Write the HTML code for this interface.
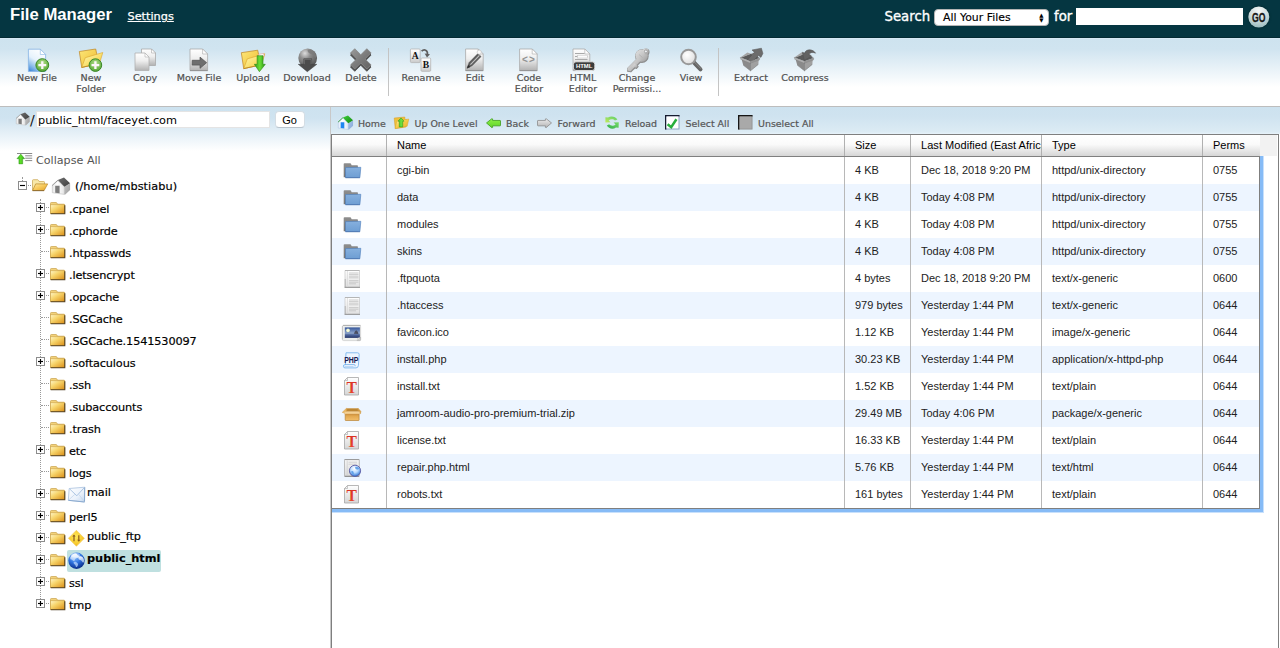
<!DOCTYPE html>
<html><head><meta charset="utf-8"><title>File Manager</title>
<style>
html,body{margin:0;padding:0;}
body{width:1280px;height:648px;overflow:hidden;background:#fff;position:relative;font-family:"DejaVu Sans","Liberation Sans",sans-serif;}
svg{display:block;overflow:visible;}
.a{position:absolute;white-space:nowrap;}
#hdr{position:absolute;left:0;top:0;width:1280px;height:38px;background:#053641;box-shadow:inset 0 -1px 0 #032a33;}
#title{left:10px;top:5px;font:bold 16.7px/20px "Liberation Sans",sans-serif;color:#fff;}
#settings{-webkit-text-stroke:0.25px #fff;left:127.5px;top:9px;font-size:11.3px;line-height:16px;color:#fff;text-decoration:underline;}
#srch{-webkit-text-stroke:0.35px #fff;left:884.5px;top:8px;font-size:13.3px;line-height:18px;color:#fff;}
#for{-webkit-text-stroke:0.35px #fff;left:1054px;top:8px;font-size:13.3px;line-height:18px;color:#fff;}
#sel{left:934px;top:9px;width:115px;height:17px;background:#fff;border-radius:4px;box-sizing:border-box;border:1px solid #b5b5b5;font-size:10.9px;line-height:15px;color:#000;padding-left:8px;-webkit-text-stroke:0.15px #000;}
#sinp{left:1076px;top:8px;width:167px;height:17px;background:#fff;}
#go{transform:translate(0.3px,0.5px);left:1248px;top:6px;width:21px;height:21px;border-radius:50%;background:radial-gradient(circle at 50% 22%,#f6f8f8 0,#d3dfe0 42%,#a4c2c6 78%,#88aeb4 100%);box-shadow:0 0 1.5px 0.5px #02262d;font:bold 12px/23px "Liberation Sans",sans-serif;color:#161616;text-align:center;-webkit-text-stroke:0.3px #161616;}
#go span{display:inline-block;transform:scaleX(0.72);transform-origin:50% 50%;}
#tb{position:absolute;left:0;top:38px;width:1280px;height:68px;background:linear-gradient(#ddeefa 0,#cee3ef 1px,#d0e4f0 11px,#fff 49px);border-bottom:1px solid #bdbdbd;}
.ti{position:absolute;top:10px;width:54px;text-align:center;font-size:9.55px;line-height:11px;color:#505050;-webkit-text-stroke:0.2px #505050;}
.ti svg{margin:0 auto 0;}
.sep{position:absolute;top:10px;width:1px;height:48px;background:#c4c4c4;}
#lp{position:absolute;left:0;top:107px;width:330px;height:541px;background:linear-gradient(#cde2ef 0,#cfe3f0 11px,#fff 44px);border-right:1px solid #c8c8c8;}
#rp{position:absolute;left:331px;top:107px;width:949px;height:27px;background:linear-gradient(#cde2ef 0,#cfe3f0 35%,#dcebf4 92%,#e8f3fa 100%);}
.nv{-webkit-text-stroke:0.2px #555;font-size:9.45px;line-height:12px;color:#555;top:10.5px;}
#pinp{left:36px;top:4px;width:234px;height:17px;background:#fff;box-sizing:border-box;border:1px solid #e4e4e4;font-size:11.3px;line-height:17px;color:#000;padding-left:1px;}
#pgo{left:274.5px;top:4px;width:30px;height:16.5px;box-sizing:border-box;background:#fff;border:1px solid #d4dde4;border-bottom-color:#b9c4cd;border-radius:4px;font:11px/17px "Liberation Sans",sans-serif;text-align:center;color:#000;}
.tr{font:11.3px/14px "DejaVu Sans","Liberation Sans",sans-serif;color:#000;letter-spacing:-0.13px;-webkit-text-stroke:0.18px #000;}
#grid{overflow:hidden;position:absolute;left:331px;top:134px;width:946px;height:514px;border:1px solid #7f7f7f;border-bottom:0;background:#fff;}
#gh{z-index:2;position:absolute;left:0;top:0;width:945px;height:21px;background:#f2f2f2;}
#ghi{position:absolute;left:0;top:0;width:928px;height:21px;background:linear-gradient(#fff 0,#fafafa 45%,#d6d6d6 100%);border-bottom:1px solid #7f7f7f;}
.hc{position:absolute;top:0;height:21px;border-left:1px solid #b0b0b0;font:11px/21px "Liberation Sans",sans-serif;color:#000;padding-left:10px;box-sizing:border-box;overflow:hidden;white-space:nowrap;}
#gb{position:absolute;left:0;top:22px;width:927px;height:351px;border-right:1px solid #7f7f7f;border-bottom:1px solid #7f7f7f;box-shadow:0 0 0 3px #86bbf6,0 0 0 4px rgba(134,187,246,.45);}
.row{position:absolute;left:0;width:927px;height:27px;}
.row.o{background:#edf5ff;}
.c{position:absolute;top:0;height:27px;border-left:1px solid #b8b8b8;font:11px/27px "Liberation Sans",sans-serif;color:#222;padding-left:10px;box-sizing:border-box;white-space:nowrap;}
</style></head><body>
<div id="hdr"><div class="a" id="title">File Manager</div><div class="a" id="settings">Settings</div><div class="a" id="srch">Search</div><div class="a" id="sel">All Your Files<span class="a" style="right:4.5px;font-size:5.5px;line-height:5.5px;top:2.5px;text-align:center;-webkit-text-stroke:0">&#9650;<br>&#9660;</span></div><div class="a" id="for">for</div><div class="a" id="sinp"></div><div class="a" id="go"><span>GO</span></div></div>
<div id="tb">
<div class="ti" style="left:10px"><svg width="24" height="24" viewBox="0 0 24 24" ><defs><linearGradient id="g1" x1="0.7" y1="0" x2="0.2" y2="1"><stop offset="0" stop-color="#fff"/><stop offset="0.5" stop-color="#e6f2fc"/><stop offset="0.8" stop-color="#8bbcea"/><stop offset="1" stop-color="#4a8edb"/></linearGradient></defs><path d="M3.4 1.2h11.899999999999999l5.3 5.3v17.0h-17.2z" fill="url(#g1)" stroke="#86b4e4" stroke-width="0.8"/><path d="M15.299999999999997 1.2v5.3h5.3z" fill="#fff" stroke="#86b4e4" stroke-width="0.6"/><defs><radialGradient id="g2" cx="0.5" cy="0.35" r="0.7"><stop offset="0" stop-color="#b4dc8c"/><stop offset="0.700" stop-color="#6cb648"/><stop offset="1" stop-color="#4a9a2c"/></radialGradient></defs><circle cx="17.3" cy="17.1" r="6.4" fill="url(#g2)" stroke="#3a8626" stroke-width="1"/><path d="M13.332 17.1h7.936M17.3 13.132000000000001v7.936" stroke="#fdf6fa" stroke-width="2.300" fill="none"/></svg>New File</div>
<div class="ti" style="left:64px"><svg width="24" height="24" viewBox="0 0 24 24" ><defs><linearGradient id="g3" x1="0" y1="0" x2="1" y2="1"><stop offset="0" stop-color="#fff8b8"/><stop offset="0.5" stop-color="#fae272"/><stop offset="1" stop-color="#f2c236"/></linearGradient></defs><defs><linearGradient id="g4" x1="0" y1="0" x2="1" y2="1"><stop offset="0" stop-color="#fde77a"/><stop offset="1" stop-color="#eebc30"/></linearGradient></defs><g transform="translate(0,0)"><path d="M0.300 3.500l16.400-2.500 1 4.800v10.200l-15 3.400z" fill="url(#g4)" stroke="#bd8424" stroke-width="0.700"/><path d="M2.700 19.400l3.600-9.700 17.500-5.200-3.300 11z" fill="url(#g3)" stroke="#d9a32c" stroke-width="0.600"/><path d="M2.700 19.400l17.800-3.900" stroke="#b07c20" stroke-width="0.700"/></g><defs><radialGradient id="g5" cx="0.5" cy="0.35" r="0.7"><stop offset="0" stop-color="#b4dc8c"/><stop offset="0.700" stop-color="#6cb648"/><stop offset="1" stop-color="#4a9a2c"/></radialGradient></defs><circle cx="16.4" cy="17.1" r="6.3" fill="url(#g5)" stroke="#3a8626" stroke-width="1"/><path d="M12.494 17.1h7.811999999999999M16.4 13.194000000000003v7.811999999999999" stroke="#fdf6fa" stroke-width="2.300" fill="none"/></svg>New<br>Folder</div>
<div class="ti" style="left:118px"><svg width="24" height="24" viewBox="0 0 24 24" ><defs><linearGradient id="g6" x1="0" y1="0" x2="0" y2="1"><stop offset="0" stop-color="#ffffff"/><stop offset="0.45" stop-color="#eeeeee"/><stop offset="1" stop-color="#b2b2b2"/></linearGradient></defs><path d="M8.5 1h10l4 4v12.5h-14z" fill="url(#g6)" stroke="#a9a9a9" stroke-width="0.8"/><path d="M18.5 1v4h4z" fill="#fff" stroke="#a9a9a9" stroke-width="0.6"/><path d="M2 5h10l4 4v13.5h-14z" fill="url(#g6)" stroke="#b0b0b0" stroke-width="0.8"/><path d="M12 5v4h4z" fill="#fff" stroke="#b0b0b0" stroke-width="0.6"/></svg>Copy</div>
<div class="ti" style="left:172px"><svg width="24" height="24" viewBox="0 0 24 24" ><defs><linearGradient id="g7" x1="0" y1="0" x2="0" y2="1"><stop offset="0" stop-color="#ffffff"/><stop offset="0.45" stop-color="#eeeeee"/><stop offset="1" stop-color="#b2b2b2"/></linearGradient></defs><path d="M3 1h12.600000000000001l5 5v16.6h-17.6z" fill="url(#g7)" stroke="#a9a9a9" stroke-width="0.8"/><path d="M15.600000000000001 1v5h5z" fill="#fff" stroke="#a9a9a9" stroke-width="0.6"/><path d="M3 22.600h17.600" stroke="#8e8e8e" stroke-width="0.900"/><path d="M5.2 12.300h7.800v-3.200l6.600 5.600-6.600 5.600v-3.200h-7.800z" fill="#6e6e6e" stroke="#505050" stroke-width="0.700"/></svg>Move File</div>
<div class="ti" style="left:226px"><svg width="24" height="24" viewBox="0 0 24 24" ><defs><linearGradient id="g8" x1="0" y1="0" x2="1" y2="1"><stop offset="0" stop-color="#fff8b8"/><stop offset="0.5" stop-color="#fae272"/><stop offset="1" stop-color="#f2c236"/></linearGradient><linearGradient id="g9" x1="0" y1="0" x2="1" y2="0"><stop offset="0" stop-color="#2f9e1a"/><stop offset="0.500" stop-color="#6ade36"/><stop offset="1" stop-color="#2a9418"/></linearGradient></defs><defs><linearGradient id="g10" x1="0" y1="0" x2="1" y2="1"><stop offset="0" stop-color="#fde77a"/><stop offset="1" stop-color="#eebc30"/></linearGradient></defs><g transform="translate(0,1.2)"><path d="M0.300 3.500l16.400-2.500 1 4.800v10.200l-15 3.400z" fill="url(#g10)" stroke="#bd8424" stroke-width="0.700"/><path d="M2.700 19.400l3.600-9.700 17.500-5.200-3.300 11z" fill="url(#g8)" stroke="#d9a32c" stroke-width="0.600"/><path d="M2.700 19.400l17.800-3.900" stroke="#b07c20" stroke-width="0.700"/></g><path d="M17 6.500l5.500-1 0.800 2.500-5 1z" fill="#fff" stroke="#e08a7a" stroke-width="0.500"/><path d="M16.100 7.700h5.900v8.600h2.300l-5.900 7.400-5-7.400h2.700z" fill="url(#g9)" stroke="#2b8a1a" stroke-width="0.600"/></svg>Upload</div>
<div class="ti" style="left:280px"><svg width="24" height="24" viewBox="0 0 24 24" ><defs><radialGradient id="g11" cx="0.350" cy="0.250" r="0.850"><stop offset="0" stop-color="#dcdcdc"/><stop offset="0.350" stop-color="#8e8e8e"/><stop offset="1" stop-color="#4e4e4e"/></radialGradient></defs><circle cx="12.700" cy="10" r="9.400" fill="url(#g11)"/><path d="M13 2c2.500-0.500 5 0.500 6.500 2.500s2 4 1.500 5-2-0.500-3-2-3-1.500-4-2.500-2-2.500-1-3z" fill="#7a7a7a" opacity="0.800"/><path d="M8.800 10.800h7.800v5.500h5.200l-9.500 7.400-9-7.400h5.500z" fill="#4c4c4c" stroke="#3c3c3c" stroke-width="0.500"/><path d="M9.300 16.200v-4.900h6.800v4.900" fill="none" stroke="#7e7e7e" stroke-width="0.700"/></svg>Download</div>
<div class="ti" style="left:334px"><svg width="24" height="24" viewBox="0 0 24 24" ><defs><linearGradient id="g12" x1="0" y1="0" x2="1" y2="1"><stop offset="0" stop-color="#9a9a9a"/><stop offset="0.500" stop-color="#7c7c7c"/><stop offset="1" stop-color="#626262"/></linearGradient></defs><path d="M5.770 0.700L11.800 6.730L17.830 0.700L22 4.870L15.970 10.900L22 16.830L17.830 21L11.800 14.970L5.770 21L1.600 16.830L7.630 10.900L1.600 4.870Z" transform="translate(0,2.300)" fill="#4c4c4c" stroke="#4c4c4c" stroke-width="0.800" stroke-linejoin="round"/><path d="M5.770 0.700L11.800 6.730L17.830 0.700L22 4.870L15.970 10.900L22 16.830L17.830 21L11.800 14.970L5.770 21L1.600 16.830L7.630 10.900L1.600 4.870Z" transform="translate(0,1.100)" fill="#565656" stroke="#565656" stroke-width="0.800" stroke-linejoin="round"/><path d="M5.770 0.700L11.800 6.730L17.830 0.700L22 4.870L15.970 10.900L22 16.830L17.830 21L11.800 14.970L5.770 21L1.600 16.830L7.630 10.900L1.600 4.870Z" fill="url(#g12)" stroke="#8a8a8a" stroke-width="0.800" stroke-linejoin="round"/></svg>Delete</div>
<div class="sep" style="left:388px"></div>
<div class="ti" style="left:394px"><svg width="24" height="24" viewBox="0 0 24 24" ><defs><linearGradient id="g13" x1="0" y1="0" x2="0" y2="1"><stop offset="0" stop-color="#ffffff"/><stop offset="0.45" stop-color="#eeeeee"/><stop offset="1" stop-color="#cacaca"/></linearGradient></defs><rect x="1.400" y="1" width="9.800" height="13.600" rx="1" fill="url(#g13)" stroke="#b4b4b4" stroke-width="0.800"/><rect x="12" y="10" width="9.700" height="13.300" rx="1" fill="url(#g13)" stroke="#b4b4b4" stroke-width="0.800"/><text x="6.300" y="10.800" font-family="Liberation Serif,serif" font-weight="bold" font-size="9.600" text-anchor="middle" fill="#111">A</text><text x="16.900" y="20.200" font-family="Liberation Serif,serif" font-weight="bold" font-size="9.600" text-anchor="middle" fill="#111">B</text><path d="M12.600 3.200c2.400-2.400 6.400-1.400 5.800 3.200" fill="none" stroke="#5e5e5e" stroke-width="1.700"/><path d="M15.600 5.600l5.400 0.600-3 3.400z" fill="#5e5e5e"/></svg>Rename</div>
<div class="ti" style="left:448px"><svg width="24" height="24" viewBox="0 0 24 24" ><defs><linearGradient id="g14" x1="0" y1="0" x2="0" y2="1"><stop offset="0" stop-color="#ffffff"/><stop offset="0.45" stop-color="#eeeeee"/><stop offset="1" stop-color="#b2b2b2"/></linearGradient></defs><path d="M2.6 1h12.600000000000001l5 5v16.6h-17.6z" fill="url(#g14)" stroke="#a9a9a9" stroke-width="0.8"/><path d="M15.200000000000003 1v5h5z" fill="#fff" stroke="#a9a9a9" stroke-width="0.6"/><path d="M2.600 22.600h17.600" stroke="#8e8e8e" stroke-width="0.900"/><path d="M4 20.300l2.100-5.700 8.800-9 3.200 3-8.800 9z" fill="#5c5c5c" stroke="#4a4a4a" stroke-width="0.500"/><path d="M7.400 16.600l9-9.200" stroke="#c4c4c4" stroke-width="1.100"/><path d="M4 20.300l1.300-3.400 2 2z" fill="#2c2c2c"/><circle cx="16.200" cy="4.200" r="2.100" fill="#fafafa" stroke="#c2c2c2" stroke-width="0.600"/></svg>Edit</div>
<div class="ti" style="left:502px"><svg width="24" height="24" viewBox="0 0 24 24" ><defs><linearGradient id="g15" x1="0" y1="0" x2="0" y2="1"><stop offset="0" stop-color="#ffffff"/><stop offset="0.45" stop-color="#eeeeee"/><stop offset="1" stop-color="#b2b2b2"/></linearGradient></defs><path d="M2.6 1h12.600000000000001l5 5v16.6h-17.6z" fill="url(#g15)" stroke="#a9a9a9" stroke-width="0.8"/><path d="M15.200000000000003 1v5h5z" fill="#fff" stroke="#a9a9a9" stroke-width="0.6"/><path d="M2.600 22.600h17.600" stroke="#8e8e8e" stroke-width="0.900"/><text x="12" y="15.400" font-family="Liberation Sans,sans-serif" font-weight="bold" font-size="10" text-anchor="middle" fill="#929292" letter-spacing="1.200">&lt;&gt;</text></svg>Code<br>Editor</div>
<div class="ti" style="left:556px"><svg width="24" height="24" viewBox="0 0 24 24" ><defs><linearGradient id="g16" x1="0" y1="0" x2="0" y2="1"><stop offset="0" stop-color="#ffffff"/><stop offset="0.45" stop-color="#eeeeee"/><stop offset="1" stop-color="#b2b2b2"/></linearGradient></defs><path d="M2 1h11.8l5 5v16.6h-16.8z" fill="url(#g16)" stroke="#a9a9a9" stroke-width="0.8"/><path d="M13.8 1v5h5z" fill="#fff" stroke="#a9a9a9" stroke-width="0.6"/><path d="M4 5.500h9.500M4 8.500h12.500M4 11.500h12.500" stroke="#a9a9a9" stroke-width="1"/><rect x="6.500" y="7.200" width="10" height="2.800" fill="#fcfcfc" stroke="#c0c0c0" stroke-width="0.500"/><rect x="2.400" y="13.800" width="21.400" height="8.700" rx="2.600" fill="#3c3c3c" stroke="#e4e4e4" stroke-width="0.900"/><text x="13.200" y="20.300" font-family="Liberation Sans,sans-serif" font-weight="bold" font-size="5.900" text-anchor="middle" fill="#fff">HTML</text></svg>HTML<br>Editor</div>
<div class="ti" style="left:610px"><svg width="24" height="24" viewBox="0 0 24 24" ><defs><linearGradient id="g17" x1="0" y1="0" x2="1" y2="1"><stop offset="0" stop-color="#e2e2e2"/><stop offset="0.500" stop-color="#c6c6c6"/><stop offset="1" stop-color="#9c9c9c"/></linearGradient></defs><g fill="#8e8e8e" stroke="#8e8e8e" stroke-width="1.300" stroke-linejoin="round" transform="translate(0.300,0.500)"><circle cx="16.600" cy="7.600" r="6.200"/><circle cx="20.600" cy="3.600" r="3"/><path d="M13.200 9.200l3 3-10.700 11-3.200-0.600 0.200-2.600z"/><path d="M9.500 15.500l3.200 2.600-1.600 1.800-1.400-1 -1 1.200 -1.600-1.300z"/></g><g fill="url(#g17)"><circle cx="16.600" cy="7.600" r="6.200"/><circle cx="20.600" cy="3.600" r="3"/><path d="M13.200 9.200l3 3-10.700 11-3.200-0.600 0.200-2.600z"/><path d="M9.500 15.500l3.200 2.600-1.600 1.800-1.400-1 -1 1.200 -1.600-1.300z"/></g><circle cx="20.900" cy="3.400" r="1.500" fill="#eef1f4" stroke="#8e8e8e" stroke-width="0.700"/><path d="M14 6.500l3.500 3" stroke="#a8a8a8" stroke-width="0.600"/></svg>Change<br>Permissi...</div>
<div class="ti" style="left:664px"><svg width="24" height="24" viewBox="0 0 24 24" ><defs><radialGradient id="g18" cx="0.4" cy="0.35" r="0.7"><stop offset="0" stop-color="#ffffff"/><stop offset="1" stop-color="#dcdcdc"/></radialGradient></defs><path d="M14.500 14l7 7.300" stroke="#666" stroke-width="4" stroke-linecap="round"/><path d="M14.500 13.200l7.300 7.300" stroke="#8a8a8a" stroke-width="1" stroke-linecap="round"/><circle cx="9.500" cy="9" r="7.300" fill="url(#g18)" stroke="#989898" stroke-width="2"/></svg>View</div>
<div class="sep" style="left:718px"></div>
<div class="ti" style="left:724px"><svg width="24" height="24" viewBox="0 0 24 24" ><path d="M1.300 9.400l10.600-3.600 8.800 4.300-9.200 3.200z" fill="#5a5a5a"/><path d="M1.300 9.400l7.100-4.900 3.500 1.300-10 4.200z" fill="#a4a4a4"/><path d="M11.900 5.800l3.500-1.100 5.300 5.400z" fill="#8c8c8c"/><path d="M8.800 11.600l6.600-7.400-2.400-2.200 9.400-1.800 1.500 5.200-2 4-2.300-2-6.800 6.800z" fill="#6c6c6c" stroke="#525252" stroke-width="0.500"/><path d="M2.400 10.400l9.100 3.600v8.800l-7.300-5.700z" fill="#8a8a8a"/><path d="M11.500 14l8.300-3.200-0.500 5.600-7.800 6.400z" fill="#a0a0a0"/><path d="M1.300 9.400l10.200 3.900v1.900l-9.800-3.900z" fill="#b2b2b2" stroke="#7c7c7c" stroke-width="0.300"/><path d="M11.500 13.300l9.200-3.200-0.200 1.800-9 3.300z" fill="#969696" stroke="#7c7c7c" stroke-width="0.300"/><path d="M11.500 15v7.800" stroke="#747474" stroke-width="0.600"/><path d="M4.200 17.100l7.300 5.700 7.800-6.400" fill="none" stroke="#707070" stroke-width="0.500"/></svg>Extract</div>
<div class="ti" style="left:778px"><svg width="24" height="24" viewBox="0 0 24 24" ><path d="M1.300 9.400l10.600-3.600 8.800 4.300-9.200 3.200z" fill="#5a5a5a"/><path d="M1.300 9.400l7.100-4.900 3.500 1.300-10 4.200z" fill="#a4a4a4"/><path d="M11.900 5.800l3.500-1.100 5.300 5.400z" fill="#8c8c8c"/><path d="M22.600 5.200c-2.600-4.400-9.600-4.600-11-0.200l-2.400-0.800 2.200 8.200 7-4.200-2.600-1.400c1-2.400 3.800-3 6.800-1.600z" fill="#626262" stroke="#505050" stroke-width="0.500"/><path d="M2.400 10.400l9.100 3.600v8.800l-7.300-5.700z" fill="#8a8a8a"/><path d="M11.500 14l8.300-3.200-0.500 5.600-7.800 6.400z" fill="#a0a0a0"/><path d="M1.300 9.400l10.200 3.900v1.900l-9.800-3.900z" fill="#b2b2b2" stroke="#7c7c7c" stroke-width="0.300"/><path d="M11.500 13.300l9.200-3.200-0.200 1.800-9 3.300z" fill="#969696" stroke="#7c7c7c" stroke-width="0.300"/><path d="M11.500 15v7.800" stroke="#747474" stroke-width="0.600"/><path d="M4.200 17.100l7.300 5.700 7.800-6.400" fill="none" stroke="#707070" stroke-width="0.500"/></svg>Compress</div>
</div>
<div id="lp">
<div class="a" style="left:15.5px;top:5px"><svg width="14" height="13.6" viewBox="0 0 18.500 18" ><defs><linearGradient id="g19" x1="0" y1="0" x2="1" y2="1"><stop offset="0" stop-color="#6e6e6e"/><stop offset="1" stop-color="#3e3e3e"/></linearGradient><linearGradient id="g20" x1="0" y1="0" x2="1" y2="0"><stop offset="0" stop-color="#e6e6e6"/><stop offset="0.400" stop-color="#ffffff"/><stop offset="1" stop-color="#e6e6e6"/></linearGradient><linearGradient id="g21" x1="0" y1="0" x2="1" y2="1"><stop offset="0" stop-color="#c4c4c4"/><stop offset="1" stop-color="#9c9c9c"/></linearGradient></defs><path d="M0.300 8.600l5.600-4.900 6.400 6v7.700l-12-1.700z" fill="url(#g20)" stroke="#b4b4b4" stroke-width="0.500"/><path d="M12.300 9.700l5.800-3.200v6.500l-4.800 4.400h-1z" fill="url(#g21)"/><path d="M3.200 8.800h4.400v7.400l-4.400-0.500z" fill="#7c7c7c"/><path d="M5.800 3.100l6.200-2.600 6.100 5.700-5.700 3.600z" fill="url(#g19)"/><path d="M5.900 3.200l-5.800 5.300" stroke="#9a9a9a" stroke-width="1" fill="none"/></svg></div><div class="a" style="left:30px;top:4px;font-size:14px;line-height:18px;color:#111">/</div><div class="a" id="pinp">public_html/faceyet.com</div><div class="a" id="pgo">Go</div>
<div class="a" style="left:17px;top:46px"><svg width="16" height="11" viewBox="0 0 16 11" ><defs><linearGradient id="g22" x1="0" y1="0" x2="1" y2="0"><stop offset="0" stop-color="#2fae14"/><stop offset="0.500" stop-color="#5fe02a"/><stop offset="1" stop-color="#2a9a12"/></linearGradient></defs><path d="M0 0.500h15.200" stroke="#7c7c7c" stroke-width="0.900"/><path d="M8.200 2.800h7M8.200 5.200h7M8.200 7.600h7" stroke="#6a6a6a" stroke-width="0.800"/><path d="M3.800 1.100l3.900 4.600h-2v5.200h-3.800v-5.200h-2z" fill="url(#g22)" stroke="#2a8a14" stroke-width="0.400"/></svg></div><div class="a" style="left:36px;top:46px;font-size:11.15px;line-height:15px;color:#555">Collapse All</div>
<div class="a" style="left:22px;top:70px;width:0;height:4px;border-left:1px dotted #999"></div><div class="a" style="left:18px;top:74px"><svg width="9" height="9" viewBox="0 0 9 9" ><rect x="0.500" y="0.500" width="8" height="8" fill="#fff" stroke="#8c8c8c" stroke-width="1"/><path d="M2 4.500h5" stroke="#000" stroke-width="1.150"/></svg></div><div class="a" style="left:28px;top:78px;width:3px;height:0;border-top:1px dotted #999"></div><div class="a" style="left:32px;top:72px"><svg width="16" height="12" viewBox="0 0 16 12" ><defs><linearGradient id="g23" x1="0" y1="0" x2="1" y2="1"><stop offset="0" stop-color="#ffe9a0"/><stop offset="0.500" stop-color="#f7c95a"/><stop offset="1" stop-color="#e0a028"/></linearGradient></defs><path d="M0.500 11.200v-9.700q0-0.800 0.800-0.800h4.200q0.600 0 0.900 0.500l0.700 1.300h4.600q0.800 0 0.800 0.800v2.200" fill="#f8e8a8" stroke="#c9a24a" stroke-width="0.700"/><path d="M0.600 11.500l3.100-6.600h12l-3.600 6.600z" fill="url(#g23)" stroke="#b8862a" stroke-width="0.700"/><path d="M0.600 11.700h11.500" stroke="#6a4a1a" stroke-width="0.800" opacity="0.800"/></svg></div><div class="a" style="left:52px;top:70px"><svg width="18.5" height="18" viewBox="0 0 18.500 18" ><defs><linearGradient id="g24" x1="0" y1="0" x2="1" y2="1"><stop offset="0" stop-color="#6e6e6e"/><stop offset="1" stop-color="#3e3e3e"/></linearGradient><linearGradient id="g25" x1="0" y1="0" x2="1" y2="0"><stop offset="0" stop-color="#e6e6e6"/><stop offset="0.400" stop-color="#ffffff"/><stop offset="1" stop-color="#e6e6e6"/></linearGradient><linearGradient id="g26" x1="0" y1="0" x2="1" y2="1"><stop offset="0" stop-color="#c4c4c4"/><stop offset="1" stop-color="#9c9c9c"/></linearGradient></defs><path d="M0.300 8.600l5.600-4.900 6.400 6v7.700l-12-1.700z" fill="url(#g25)" stroke="#b4b4b4" stroke-width="0.500"/><path d="M12.300 9.700l5.800-3.200v6.500l-4.800 4.400h-1z" fill="url(#g26)"/><path d="M3.200 8.800h4.400v7.400l-4.400-0.500z" fill="#7c7c7c"/><path d="M5.800 3.100l6.200-2.600 6.100 5.700-5.700 3.600z" fill="url(#g24)"/><path d="M5.900 3.200l-5.800 5.300" stroke="#9a9a9a" stroke-width="1" fill="none"/></svg></div><div class="a tr" style="left:75px;top:73px;letter-spacing:0.05px">(/home/mbstiabu)</div>
<div class="a" style="left:40px;top:92px;width:0;height:406px;border-left:1px dotted #999"></div>
<div class="a" style="left:36px;top:96px"><svg width="9" height="9" viewBox="0 0 9 9" ><rect x="0.500" y="0.500" width="8" height="8" fill="#fff" stroke="#8c8c8c" stroke-width="1"/><path d="M2 4.500h5" stroke="#000" stroke-width="1.150"/><path d="M4.500 2v5" stroke="#000" stroke-width="1.150"/></svg></div><div class="a" style="left:46px;top:100px;width:3px;height:0;border-top:1px dotted #999"></div><div class="a" style="left:50px;top:95px"><svg width="15" height="12" viewBox="0 0 15 12" ><defs><linearGradient id="g27" x1="0" y1="0" x2="1" y2="1"><stop offset="0" stop-color="#fff6c8"/><stop offset="0.400" stop-color="#f7d56c"/><stop offset="0.850" stop-color="#e2a02c"/><stop offset="1" stop-color="#d48c1c"/></linearGradient></defs><path d="M0.500 3v-1.700q0-0.800 0.800-0.800h4.700q0.600 0 0.900 0.500l0.600 1.200h6.500q0.700 0 0.700 0.700v8.300h-14.200z" fill="#f3d27a" stroke="#c9a24a" stroke-width="0.700"/><rect x="0.500" y="2.800" width="14" height="8.700" fill="url(#g27)" stroke="#caa048" stroke-width="0.600"/><path d="M0.700 11.700h14.100v-8.500" fill="none" stroke="#3e2c10" stroke-width="1.100" opacity="0.850"/></svg></div><div class="a tr" style="left:69px;top:96px">.cpanel</div>
<div class="a" style="left:36px;top:118px"><svg width="9" height="9" viewBox="0 0 9 9" ><rect x="0.500" y="0.500" width="8" height="8" fill="#fff" stroke="#8c8c8c" stroke-width="1"/><path d="M2 4.500h5" stroke="#000" stroke-width="1.150"/><path d="M4.500 2v5" stroke="#000" stroke-width="1.150"/></svg></div><div class="a" style="left:46px;top:122px;width:3px;height:0;border-top:1px dotted #999"></div><div class="a" style="left:50px;top:117px"><svg width="15" height="12" viewBox="0 0 15 12" ><defs><linearGradient id="g28" x1="0" y1="0" x2="1" y2="1"><stop offset="0" stop-color="#fff6c8"/><stop offset="0.400" stop-color="#f7d56c"/><stop offset="0.850" stop-color="#e2a02c"/><stop offset="1" stop-color="#d48c1c"/></linearGradient></defs><path d="M0.500 3v-1.700q0-0.800 0.800-0.800h4.700q0.600 0 0.900 0.500l0.600 1.200h6.500q0.700 0 0.700 0.700v8.300h-14.200z" fill="#f3d27a" stroke="#c9a24a" stroke-width="0.700"/><rect x="0.500" y="2.800" width="14" height="8.700" fill="url(#g28)" stroke="#caa048" stroke-width="0.600"/><path d="M0.700 11.700h14.100v-8.500" fill="none" stroke="#3e2c10" stroke-width="1.100" opacity="0.850"/></svg></div><div class="a tr" style="left:69px;top:118px">.cphorde</div>
<div class="a" style="left:41px;top:144px;width:8px;height:0;border-top:1px dotted #999"></div><div class="a" style="left:50px;top:139px"><svg width="15" height="12" viewBox="0 0 15 12" ><defs><linearGradient id="g29" x1="0" y1="0" x2="1" y2="1"><stop offset="0" stop-color="#fff6c8"/><stop offset="0.400" stop-color="#f7d56c"/><stop offset="0.850" stop-color="#e2a02c"/><stop offset="1" stop-color="#d48c1c"/></linearGradient></defs><path d="M0.500 3v-1.700q0-0.800 0.800-0.800h4.700q0.600 0 0.900 0.500l0.600 1.200h6.500q0.700 0 0.700 0.700v8.300h-14.200z" fill="#f3d27a" stroke="#c9a24a" stroke-width="0.700"/><rect x="0.500" y="2.800" width="14" height="8.700" fill="url(#g29)" stroke="#caa048" stroke-width="0.600"/><path d="M0.700 11.700h14.100v-8.500" fill="none" stroke="#3e2c10" stroke-width="1.100" opacity="0.850"/></svg></div><div class="a tr" style="left:69px;top:140px">.htpasswds</div>
<div class="a" style="left:36px;top:162px"><svg width="9" height="9" viewBox="0 0 9 9" ><rect x="0.500" y="0.500" width="8" height="8" fill="#fff" stroke="#8c8c8c" stroke-width="1"/><path d="M2 4.500h5" stroke="#000" stroke-width="1.150"/><path d="M4.500 2v5" stroke="#000" stroke-width="1.150"/></svg></div><div class="a" style="left:46px;top:166px;width:3px;height:0;border-top:1px dotted #999"></div><div class="a" style="left:50px;top:161px"><svg width="15" height="12" viewBox="0 0 15 12" ><defs><linearGradient id="g30" x1="0" y1="0" x2="1" y2="1"><stop offset="0" stop-color="#fff6c8"/><stop offset="0.400" stop-color="#f7d56c"/><stop offset="0.850" stop-color="#e2a02c"/><stop offset="1" stop-color="#d48c1c"/></linearGradient></defs><path d="M0.500 3v-1.700q0-0.800 0.800-0.800h4.700q0.600 0 0.900 0.500l0.600 1.200h6.500q0.700 0 0.700 0.700v8.300h-14.200z" fill="#f3d27a" stroke="#c9a24a" stroke-width="0.700"/><rect x="0.500" y="2.800" width="14" height="8.700" fill="url(#g30)" stroke="#caa048" stroke-width="0.600"/><path d="M0.700 11.700h14.100v-8.500" fill="none" stroke="#3e2c10" stroke-width="1.100" opacity="0.850"/></svg></div><div class="a tr" style="left:69px;top:162px">.letsencrypt</div>
<div class="a" style="left:36px;top:184px"><svg width="9" height="9" viewBox="0 0 9 9" ><rect x="0.500" y="0.500" width="8" height="8" fill="#fff" stroke="#8c8c8c" stroke-width="1"/><path d="M2 4.500h5" stroke="#000" stroke-width="1.150"/><path d="M4.500 2v5" stroke="#000" stroke-width="1.150"/></svg></div><div class="a" style="left:46px;top:188px;width:3px;height:0;border-top:1px dotted #999"></div><div class="a" style="left:50px;top:183px"><svg width="15" height="12" viewBox="0 0 15 12" ><defs><linearGradient id="g31" x1="0" y1="0" x2="1" y2="1"><stop offset="0" stop-color="#fff6c8"/><stop offset="0.400" stop-color="#f7d56c"/><stop offset="0.850" stop-color="#e2a02c"/><stop offset="1" stop-color="#d48c1c"/></linearGradient></defs><path d="M0.500 3v-1.700q0-0.800 0.800-0.800h4.700q0.600 0 0.900 0.500l0.600 1.200h6.500q0.700 0 0.700 0.700v8.300h-14.200z" fill="#f3d27a" stroke="#c9a24a" stroke-width="0.700"/><rect x="0.500" y="2.800" width="14" height="8.700" fill="url(#g31)" stroke="#caa048" stroke-width="0.600"/><path d="M0.700 11.700h14.100v-8.500" fill="none" stroke="#3e2c10" stroke-width="1.100" opacity="0.850"/></svg></div><div class="a tr" style="left:69px;top:184px">.opcache</div>
<div class="a" style="left:41px;top:210px;width:8px;height:0;border-top:1px dotted #999"></div><div class="a" style="left:50px;top:205px"><svg width="15" height="12" viewBox="0 0 15 12" ><defs><linearGradient id="g32" x1="0" y1="0" x2="1" y2="1"><stop offset="0" stop-color="#fff6c8"/><stop offset="0.400" stop-color="#f7d56c"/><stop offset="0.850" stop-color="#e2a02c"/><stop offset="1" stop-color="#d48c1c"/></linearGradient></defs><path d="M0.500 3v-1.700q0-0.800 0.800-0.800h4.700q0.600 0 0.900 0.500l0.600 1.200h6.500q0.700 0 0.700 0.700v8.300h-14.200z" fill="#f3d27a" stroke="#c9a24a" stroke-width="0.700"/><rect x="0.500" y="2.800" width="14" height="8.700" fill="url(#g32)" stroke="#caa048" stroke-width="0.600"/><path d="M0.700 11.700h14.100v-8.500" fill="none" stroke="#3e2c10" stroke-width="1.100" opacity="0.850"/></svg></div><div class="a tr" style="left:69px;top:206px">.SGCache</div>
<div class="a" style="left:41px;top:232px;width:8px;height:0;border-top:1px dotted #999"></div><div class="a" style="left:50px;top:227px"><svg width="15" height="12" viewBox="0 0 15 12" ><defs><linearGradient id="g33" x1="0" y1="0" x2="1" y2="1"><stop offset="0" stop-color="#fff6c8"/><stop offset="0.400" stop-color="#f7d56c"/><stop offset="0.850" stop-color="#e2a02c"/><stop offset="1" stop-color="#d48c1c"/></linearGradient></defs><path d="M0.500 3v-1.700q0-0.800 0.800-0.800h4.700q0.600 0 0.900 0.500l0.600 1.200h6.500q0.700 0 0.700 0.700v8.300h-14.200z" fill="#f3d27a" stroke="#c9a24a" stroke-width="0.700"/><rect x="0.500" y="2.800" width="14" height="8.700" fill="url(#g33)" stroke="#caa048" stroke-width="0.600"/><path d="M0.700 11.700h14.100v-8.500" fill="none" stroke="#3e2c10" stroke-width="1.100" opacity="0.850"/></svg></div><div class="a tr" style="left:69px;top:228px">.SGCache.1541530097</div>
<div class="a" style="left:36px;top:250px"><svg width="9" height="9" viewBox="0 0 9 9" ><rect x="0.500" y="0.500" width="8" height="8" fill="#fff" stroke="#8c8c8c" stroke-width="1"/><path d="M2 4.500h5" stroke="#000" stroke-width="1.150"/><path d="M4.500 2v5" stroke="#000" stroke-width="1.150"/></svg></div><div class="a" style="left:46px;top:254px;width:3px;height:0;border-top:1px dotted #999"></div><div class="a" style="left:50px;top:249px"><svg width="15" height="12" viewBox="0 0 15 12" ><defs><linearGradient id="g34" x1="0" y1="0" x2="1" y2="1"><stop offset="0" stop-color="#fff6c8"/><stop offset="0.400" stop-color="#f7d56c"/><stop offset="0.850" stop-color="#e2a02c"/><stop offset="1" stop-color="#d48c1c"/></linearGradient></defs><path d="M0.500 3v-1.700q0-0.800 0.800-0.800h4.700q0.600 0 0.900 0.500l0.600 1.200h6.500q0.700 0 0.700 0.700v8.300h-14.200z" fill="#f3d27a" stroke="#c9a24a" stroke-width="0.700"/><rect x="0.500" y="2.800" width="14" height="8.700" fill="url(#g34)" stroke="#caa048" stroke-width="0.600"/><path d="M0.700 11.700h14.100v-8.500" fill="none" stroke="#3e2c10" stroke-width="1.100" opacity="0.850"/></svg></div><div class="a tr" style="left:69px;top:250px">.softaculous</div>
<div class="a" style="left:41px;top:276px;width:8px;height:0;border-top:1px dotted #999"></div><div class="a" style="left:50px;top:271px"><svg width="15" height="12" viewBox="0 0 15 12" ><defs><linearGradient id="g35" x1="0" y1="0" x2="1" y2="1"><stop offset="0" stop-color="#fff6c8"/><stop offset="0.400" stop-color="#f7d56c"/><stop offset="0.850" stop-color="#e2a02c"/><stop offset="1" stop-color="#d48c1c"/></linearGradient></defs><path d="M0.500 3v-1.700q0-0.800 0.800-0.800h4.700q0.600 0 0.900 0.500l0.600 1.200h6.500q0.700 0 0.700 0.700v8.300h-14.200z" fill="#f3d27a" stroke="#c9a24a" stroke-width="0.700"/><rect x="0.500" y="2.800" width="14" height="8.700" fill="url(#g35)" stroke="#caa048" stroke-width="0.600"/><path d="M0.700 11.700h14.100v-8.500" fill="none" stroke="#3e2c10" stroke-width="1.100" opacity="0.850"/></svg></div><div class="a tr" style="left:69px;top:272px">.ssh</div>
<div class="a" style="left:41px;top:298px;width:8px;height:0;border-top:1px dotted #999"></div><div class="a" style="left:50px;top:293px"><svg width="15" height="12" viewBox="0 0 15 12" ><defs><linearGradient id="g36" x1="0" y1="0" x2="1" y2="1"><stop offset="0" stop-color="#fff6c8"/><stop offset="0.400" stop-color="#f7d56c"/><stop offset="0.850" stop-color="#e2a02c"/><stop offset="1" stop-color="#d48c1c"/></linearGradient></defs><path d="M0.500 3v-1.700q0-0.800 0.800-0.800h4.700q0.600 0 0.900 0.500l0.600 1.200h6.500q0.700 0 0.700 0.700v8.300h-14.200z" fill="#f3d27a" stroke="#c9a24a" stroke-width="0.700"/><rect x="0.500" y="2.800" width="14" height="8.700" fill="url(#g36)" stroke="#caa048" stroke-width="0.600"/><path d="M0.700 11.700h14.100v-8.500" fill="none" stroke="#3e2c10" stroke-width="1.100" opacity="0.850"/></svg></div><div class="a tr" style="left:69px;top:294px">.subaccounts</div>
<div class="a" style="left:41px;top:320px;width:8px;height:0;border-top:1px dotted #999"></div><div class="a" style="left:50px;top:315px"><svg width="15" height="12" viewBox="0 0 15 12" ><defs><linearGradient id="g37" x1="0" y1="0" x2="1" y2="1"><stop offset="0" stop-color="#fff6c8"/><stop offset="0.400" stop-color="#f7d56c"/><stop offset="0.850" stop-color="#e2a02c"/><stop offset="1" stop-color="#d48c1c"/></linearGradient></defs><path d="M0.500 3v-1.700q0-0.800 0.800-0.800h4.700q0.600 0 0.900 0.500l0.600 1.200h6.500q0.700 0 0.700 0.700v8.300h-14.200z" fill="#f3d27a" stroke="#c9a24a" stroke-width="0.700"/><rect x="0.500" y="2.800" width="14" height="8.700" fill="url(#g37)" stroke="#caa048" stroke-width="0.600"/><path d="M0.700 11.700h14.100v-8.500" fill="none" stroke="#3e2c10" stroke-width="1.100" opacity="0.850"/></svg></div><div class="a tr" style="left:69px;top:316px">.trash</div>
<div class="a" style="left:36px;top:338px"><svg width="9" height="9" viewBox="0 0 9 9" ><rect x="0.500" y="0.500" width="8" height="8" fill="#fff" stroke="#8c8c8c" stroke-width="1"/><path d="M2 4.500h5" stroke="#000" stroke-width="1.150"/><path d="M4.500 2v5" stroke="#000" stroke-width="1.150"/></svg></div><div class="a" style="left:46px;top:342px;width:3px;height:0;border-top:1px dotted #999"></div><div class="a" style="left:50px;top:337px"><svg width="15" height="12" viewBox="0 0 15 12" ><defs><linearGradient id="g38" x1="0" y1="0" x2="1" y2="1"><stop offset="0" stop-color="#fff6c8"/><stop offset="0.400" stop-color="#f7d56c"/><stop offset="0.850" stop-color="#e2a02c"/><stop offset="1" stop-color="#d48c1c"/></linearGradient></defs><path d="M0.500 3v-1.700q0-0.800 0.800-0.800h4.700q0.600 0 0.900 0.500l0.600 1.200h6.500q0.700 0 0.700 0.700v8.300h-14.200z" fill="#f3d27a" stroke="#c9a24a" stroke-width="0.700"/><rect x="0.500" y="2.800" width="14" height="8.700" fill="url(#g38)" stroke="#caa048" stroke-width="0.600"/><path d="M0.700 11.700h14.100v-8.500" fill="none" stroke="#3e2c10" stroke-width="1.100" opacity="0.850"/></svg></div><div class="a tr" style="left:69px;top:338px">etc</div>
<div class="a" style="left:41px;top:364px;width:8px;height:0;border-top:1px dotted #999"></div><div class="a" style="left:50px;top:359px"><svg width="15" height="12" viewBox="0 0 15 12" ><defs><linearGradient id="g39" x1="0" y1="0" x2="1" y2="1"><stop offset="0" stop-color="#fff6c8"/><stop offset="0.400" stop-color="#f7d56c"/><stop offset="0.850" stop-color="#e2a02c"/><stop offset="1" stop-color="#d48c1c"/></linearGradient></defs><path d="M0.500 3v-1.700q0-0.800 0.800-0.800h4.700q0.600 0 0.900 0.500l0.600 1.200h6.500q0.700 0 0.700 0.700v8.300h-14.200z" fill="#f3d27a" stroke="#c9a24a" stroke-width="0.700"/><rect x="0.500" y="2.800" width="14" height="8.700" fill="url(#g39)" stroke="#caa048" stroke-width="0.600"/><path d="M0.700 11.700h14.100v-8.500" fill="none" stroke="#3e2c10" stroke-width="1.100" opacity="0.850"/></svg></div><div class="a tr" style="left:69px;top:360px">logs</div>
<div class="a" style="left:36px;top:382px"><svg width="9" height="9" viewBox="0 0 9 9" ><rect x="0.500" y="0.500" width="8" height="8" fill="#fff" stroke="#8c8c8c" stroke-width="1"/><path d="M2 4.500h5" stroke="#000" stroke-width="1.150"/><path d="M4.500 2v5" stroke="#000" stroke-width="1.150"/></svg></div><div class="a" style="left:46px;top:386px;width:3px;height:0;border-top:1px dotted #999"></div><div class="a" style="left:50px;top:381px"><svg width="15" height="12" viewBox="0 0 15 12" ><defs><linearGradient id="g40" x1="0" y1="0" x2="1" y2="1"><stop offset="0" stop-color="#fff6c8"/><stop offset="0.400" stop-color="#f7d56c"/><stop offset="0.850" stop-color="#e2a02c"/><stop offset="1" stop-color="#d48c1c"/></linearGradient></defs><path d="M0.500 3v-1.700q0-0.800 0.800-0.800h4.700q0.600 0 0.900 0.500l0.600 1.200h6.500q0.700 0 0.700 0.700v8.300h-14.200z" fill="#f3d27a" stroke="#c9a24a" stroke-width="0.700"/><rect x="0.500" y="2.800" width="14" height="8.700" fill="url(#g40)" stroke="#caa048" stroke-width="0.600"/><path d="M0.700 11.700h14.100v-8.500" fill="none" stroke="#3e2c10" stroke-width="1.100" opacity="0.850"/></svg></div><div class="a" style="left:68px;top:379px"><svg width="17" height="17" viewBox="0 0 17 17" ><defs><linearGradient id="g41" x1="0" y1="0" x2="1" y2="1"><stop offset="0" stop-color="#ffffff"/><stop offset="0.600" stop-color="#eaf1fb"/><stop offset="1" stop-color="#c2d6ee"/></linearGradient></defs><path d="M1.200 2.500l15.500-1.300-0.200 14.800-16.200-1.700z" fill="url(#g41)" stroke="#a9c2de" stroke-width="0.800"/><path d="M16.700 1.200l-0.200 14.800-16.200-1.700" fill="none" stroke="#86a6cc" stroke-width="0.900"/><path d="M1.500 2.800l7.300 7 7.600-8.300" fill="none" stroke="#a4c0e0" stroke-width="0.900"/><path d="M0.600 14l6.200-5.600M16.300 15.600l-5.500-7.200" stroke="#bfd3ea" stroke-width="0.700"/></svg></div><div class="a tr" style="left:87px;top:379px;">mail</div>
<div class="a" style="left:36px;top:404px"><svg width="9" height="9" viewBox="0 0 9 9" ><rect x="0.500" y="0.500" width="8" height="8" fill="#fff" stroke="#8c8c8c" stroke-width="1"/><path d="M2 4.500h5" stroke="#000" stroke-width="1.150"/><path d="M4.500 2v5" stroke="#000" stroke-width="1.150"/></svg></div><div class="a" style="left:46px;top:408px;width:3px;height:0;border-top:1px dotted #999"></div><div class="a" style="left:50px;top:403px"><svg width="15" height="12" viewBox="0 0 15 12" ><defs><linearGradient id="g42" x1="0" y1="0" x2="1" y2="1"><stop offset="0" stop-color="#fff6c8"/><stop offset="0.400" stop-color="#f7d56c"/><stop offset="0.850" stop-color="#e2a02c"/><stop offset="1" stop-color="#d48c1c"/></linearGradient></defs><path d="M0.500 3v-1.700q0-0.800 0.800-0.800h4.700q0.600 0 0.900 0.500l0.600 1.200h6.500q0.700 0 0.700 0.700v8.300h-14.200z" fill="#f3d27a" stroke="#c9a24a" stroke-width="0.700"/><rect x="0.500" y="2.800" width="14" height="8.700" fill="url(#g42)" stroke="#caa048" stroke-width="0.600"/><path d="M0.700 11.700h14.100v-8.500" fill="none" stroke="#3e2c10" stroke-width="1.100" opacity="0.850"/></svg></div><div class="a tr" style="left:69px;top:404px">perl5</div>
<div class="a" style="left:36px;top:426px"><svg width="9" height="9" viewBox="0 0 9 9" ><rect x="0.500" y="0.500" width="8" height="8" fill="#fff" stroke="#8c8c8c" stroke-width="1"/><path d="M2 4.500h5" stroke="#000" stroke-width="1.150"/><path d="M4.500 2v5" stroke="#000" stroke-width="1.150"/></svg></div><div class="a" style="left:46px;top:430px;width:3px;height:0;border-top:1px dotted #999"></div><div class="a" style="left:50px;top:425px"><svg width="15" height="12" viewBox="0 0 15 12" ><defs><linearGradient id="g43" x1="0" y1="0" x2="1" y2="1"><stop offset="0" stop-color="#fff6c8"/><stop offset="0.400" stop-color="#f7d56c"/><stop offset="0.850" stop-color="#e2a02c"/><stop offset="1" stop-color="#d48c1c"/></linearGradient></defs><path d="M0.500 3v-1.700q0-0.800 0.800-0.800h4.700q0.600 0 0.900 0.500l0.600 1.200h6.500q0.700 0 0.700 0.700v8.300h-14.200z" fill="#f3d27a" stroke="#c9a24a" stroke-width="0.700"/><rect x="0.500" y="2.800" width="14" height="8.700" fill="url(#g43)" stroke="#caa048" stroke-width="0.600"/><path d="M0.700 11.700h14.100v-8.500" fill="none" stroke="#3e2c10" stroke-width="1.100" opacity="0.850"/></svg></div><div class="a" style="left:68px;top:423px"><svg width="17" height="17" viewBox="0 0 17 17" ><defs><radialGradient id="g44" cx="0.450" cy="0.400" r="0.600"><stop offset="0" stop-color="#ffe95a"/><stop offset="0.700" stop-color="#f8cc30"/><stop offset="1" stop-color="#eeb020"/></radialGradient></defs><path d="M8.400 0.300l8 8-8 8-8-8z" fill="url(#g44)" stroke="#f4cf6a" stroke-width="0.700"/><path d="M6 4.600l1.700 2h-1.100v4.600h-1.200v-4.600h-1.100z" fill="#8a5a1c"/><path d="M10.800 11.800l1.700-2h-1.100v-4.600h-1.200v4.600h-1.100z" fill="#8a5a1c"/></svg></div><div class="a tr" style="left:87px;top:423px;">public_ftp</div>
<div class="a" style="left:36px;top:448px"><svg width="9" height="9" viewBox="0 0 9 9" ><rect x="0.500" y="0.500" width="8" height="8" fill="#fff" stroke="#8c8c8c" stroke-width="1"/><path d="M2 4.500h5" stroke="#000" stroke-width="1.150"/><path d="M4.500 2v5" stroke="#000" stroke-width="1.150"/></svg></div><div class="a" style="left:46px;top:452px;width:3px;height:0;border-top:1px dotted #999"></div><div class="a" style="left:50px;top:447px"><svg width="15" height="12" viewBox="0 0 15 12" ><defs><linearGradient id="g45" x1="0" y1="0" x2="1" y2="1"><stop offset="0" stop-color="#fff6c8"/><stop offset="0.400" stop-color="#f7d56c"/><stop offset="0.850" stop-color="#e2a02c"/><stop offset="1" stop-color="#d48c1c"/></linearGradient></defs><path d="M0.500 3v-1.700q0-0.800 0.800-0.800h4.700q0.600 0 0.900 0.500l0.600 1.200h6.500q0.700 0 0.700 0.700v8.300h-14.200z" fill="#f3d27a" stroke="#c9a24a" stroke-width="0.700"/><rect x="0.500" y="2.800" width="14" height="8.700" fill="url(#g45)" stroke="#caa048" stroke-width="0.600"/><path d="M0.700 11.700h14.100v-8.500" fill="none" stroke="#3e2c10" stroke-width="1.100" opacity="0.850"/></svg></div><div class="a" style="left:67px;top:443px;width:94px;height:22px;background:#bfe0e0;border-radius:2px"></div><div class="a" style="left:68px;top:445px"><svg width="17" height="17.5" viewBox="0 0 17 17.500" ><defs><radialGradient id="g46" cx="0.400" cy="0.250" r="0.850"><stop offset="0" stop-color="#9ccaff"/><stop offset="0.450" stop-color="#2f74e0"/><stop offset="0.800" stop-color="#123c9c"/><stop offset="1" stop-color="#0a2466"/></radialGradient><linearGradient id="g47" x1="0" y1="0" x2="0" y2="1"><stop offset="0" stop-color="#ffffff" stop-opacity="0.950"/><stop offset="1" stop-color="#cfe4ff" stop-opacity="0.600"/></linearGradient></defs><circle cx="8.500" cy="8.700" r="8.200" fill="url(#g46)"/><path d="M2.400 5.200c1-2.200 3.400-3.800 5.200-3.600s1.200 1.600 2.600 1.800 1.600 1.400 0.600 2.200-2.600 0.200-3.400 1.200-0.400 2.400-1.600 2.400-1.400-1.600-2.400-1.600-1.400-1.200-1-2.400z" fill="url(#g47)"/><path d="M11.600 4.400c1.600-0.600 3.600 0.800 4.200 2.800s0.200 3.600-0.800 3.400-1-1.800-2.200-2.400-2.400-0.600-2.400-1.800 0.400-1.600 1.200-2z" fill="url(#g47)"/><path d="M6.400 9.800c1.200-0.400 2.400 0.400 3.200 1.400s0.400 2.200-0.400 3.200-1.400 0.800-1.600-0.600-1.400-1.400-1.800-2.400-0.200-1.400 0.600-1.600z" fill="#bcd8ff" opacity="0.750"/><ellipse cx="7.500" cy="3.200" rx="4.500" ry="2.200" fill="#fff" opacity="0.350"/></svg></div><div class="a tr" style="left:87px;top:445px;font-weight:bold;letter-spacing:0;">public_html</div>
<div class="a" style="left:36px;top:470px"><svg width="9" height="9" viewBox="0 0 9 9" ><rect x="0.500" y="0.500" width="8" height="8" fill="#fff" stroke="#8c8c8c" stroke-width="1"/><path d="M2 4.500h5" stroke="#000" stroke-width="1.150"/><path d="M4.500 2v5" stroke="#000" stroke-width="1.150"/></svg></div><div class="a" style="left:46px;top:474px;width:3px;height:0;border-top:1px dotted #999"></div><div class="a" style="left:50px;top:469px"><svg width="15" height="12" viewBox="0 0 15 12" ><defs><linearGradient id="g48" x1="0" y1="0" x2="1" y2="1"><stop offset="0" stop-color="#fff6c8"/><stop offset="0.400" stop-color="#f7d56c"/><stop offset="0.850" stop-color="#e2a02c"/><stop offset="1" stop-color="#d48c1c"/></linearGradient></defs><path d="M0.500 3v-1.700q0-0.800 0.800-0.800h4.700q0.600 0 0.900 0.500l0.600 1.200h6.500q0.700 0 0.700 0.700v8.300h-14.200z" fill="#f3d27a" stroke="#c9a24a" stroke-width="0.700"/><rect x="0.500" y="2.800" width="14" height="8.700" fill="url(#g48)" stroke="#caa048" stroke-width="0.600"/><path d="M0.700 11.700h14.100v-8.500" fill="none" stroke="#3e2c10" stroke-width="1.100" opacity="0.850"/></svg></div><div class="a tr" style="left:69px;top:470px">ssl</div>
<div class="a" style="left:36px;top:492px"><svg width="9" height="9" viewBox="0 0 9 9" ><rect x="0.500" y="0.500" width="8" height="8" fill="#fff" stroke="#8c8c8c" stroke-width="1"/><path d="M2 4.500h5" stroke="#000" stroke-width="1.150"/><path d="M4.500 2v5" stroke="#000" stroke-width="1.150"/></svg></div><div class="a" style="left:46px;top:496px;width:3px;height:0;border-top:1px dotted #999"></div><div class="a" style="left:50px;top:491px"><svg width="15" height="12" viewBox="0 0 15 12" ><defs><linearGradient id="g49" x1="0" y1="0" x2="1" y2="1"><stop offset="0" stop-color="#fff6c8"/><stop offset="0.400" stop-color="#f7d56c"/><stop offset="0.850" stop-color="#e2a02c"/><stop offset="1" stop-color="#d48c1c"/></linearGradient></defs><path d="M0.500 3v-1.700q0-0.800 0.800-0.800h4.700q0.600 0 0.900 0.500l0.600 1.200h6.500q0.700 0 0.700 0.700v8.300h-14.200z" fill="#f3d27a" stroke="#c9a24a" stroke-width="0.700"/><rect x="0.500" y="2.800" width="14" height="8.700" fill="url(#g49)" stroke="#caa048" stroke-width="0.600"/><path d="M0.700 11.700h14.100v-8.500" fill="none" stroke="#3e2c10" stroke-width="1.100" opacity="0.850"/></svg></div><div class="a tr" style="left:69px;top:492px">tmp</div>
</div>
<div id="rp"><div class="a" style="left:7px;top:8px"><svg width="15.4" height="15" viewBox="0 0 18.500 18" ><defs><linearGradient id="g50" x1="0" y1="0" x2="1" y2="1"><stop offset="0" stop-color="#3fd03a"/><stop offset="1" stop-color="#138a13"/></linearGradient><linearGradient id="g51" x1="0" y1="0" x2="1" y2="0"><stop offset="0" stop-color="#dfe9f8"/><stop offset="0.400" stop-color="#ffffff"/><stop offset="1" stop-color="#dfe9f8"/></linearGradient><linearGradient id="g52" x1="0" y1="0" x2="1" y2="1"><stop offset="0" stop-color="#a9c4ea"/><stop offset="1" stop-color="#86a8d8"/></linearGradient></defs><path d="M0.300 8.600l5.600-4.900 6.400 6v7.700l-12-1.700z" fill="url(#g51)" stroke="#a4bede" stroke-width="0.500"/><path d="M12.300 9.700l5.800-3.200v6.500l-4.800 4.400h-1z" fill="url(#g52)"/><path d="M3.200 8.800h4.400v7.400l-4.400-0.500z" fill="#1f86f2"/><path d="M5.800 3.100l6.200-2.600 6.100 5.700-5.700 3.600z" fill="url(#g50)"/><path d="M5.900 3.200l-5.800 5.300" stroke="#2a9a2a" stroke-width="1" fill="none"/></svg></div><div class="a nv" style="left:27px">Home</div><div class="a" style="left:63px;top:10px"><svg width="15" height="12" viewBox="0 0 15 12" ><defs><linearGradient id="g53" x1="0" y1="0" x2="1" y2="1"><stop offset="0" stop-color="#fff2a4"/><stop offset="0.500" stop-color="#f5cb48"/><stop offset="1" stop-color="#e8ae28"/></linearGradient><linearGradient id="g54" x1="0" y1="0" x2="1" y2="0"><stop offset="0" stop-color="#4fd02a"/><stop offset="1" stop-color="#7fe84a"/></linearGradient></defs><path d="M0.200 1l10.600-1 0.200 2.600 1.600-0.200-0.600 7.600-10.800 1.600z" fill="#f0bf3a" stroke="#d29a24" stroke-width="0.500"/><path d="M1.200 11.600l1.600-7.600 12-2-1.600 7.200z" fill="url(#g53)" stroke="#d9a630" stroke-width="0.500"/><path d="M7 0.900l3 3.300h-1.300v5.700h-3.400v-5.700h-1.300z" fill="url(#g54)" stroke="#2f9a18" stroke-width="0.600"/></svg></div><div class="a nv" style="left:83.5px">Up One Level</div><div class="a" style="left:155px;top:11px"><svg width="15" height="10" viewBox="0 0 15 9.700" ><defs><linearGradient id="g55" x1="0" y1="0" x2="0" y2="1"><stop offset="0" stop-color="#8cf048"/><stop offset="1" stop-color="#62d428"/></linearGradient></defs><path d="M0.500 4.800l5.400-4.300 0.700 0.300v1.500h7.400q0.500 0 0.500 0.500v4.400q0 0.500-0.500 0.500h-7.400v1.500l-0.700 0.300z" fill="url(#g55)" stroke="#3d9c1c" stroke-width="0.800" stroke-linejoin="round"/></svg></div><div class="a nv" style="left:175px">Back</div><div class="a" style="left:206px;top:11px"><svg width="15" height="10" viewBox="0 0 15 9.700" ><defs><linearGradient id="g56" x1="0" y1="0" x2="0" y2="1"><stop offset="0" stop-color="#ececec"/><stop offset="1" stop-color="#b4b4b4"/></linearGradient></defs><path d="M14.500 4.800l-5.400-4.300-0.700 0.300v1.500h-7.400q-0.500 0-0.500 0.500v4.400q0 0.500 0.500 0.500h7.400v1.500l0.700 0.300z" fill="url(#g56)" stroke="#8c8c8c" stroke-width="0.800" stroke-linejoin="round"/></svg></div><div class="a nv" style="left:226.5px">Forward</div><div class="a" style="left:273.5px;top:9px"><svg width="14" height="13" viewBox="0 0 14 13" ><defs><linearGradient id="g57" x1="1" y1="0" x2="0" y2="1"><stop offset="0" stop-color="#5ccf6a"/><stop offset="1" stop-color="#c4ea5a"/></linearGradient><linearGradient id="g58" x1="0" y1="1" x2="1" y2="0"><stop offset="0" stop-color="#2fae4a"/><stop offset="1" stop-color="#7adc6a"/></linearGradient></defs><path d="M12.400 3.600c-1.900-3.200-6.400-4.200-9.400-2l-2.600-0.400v5.400l5.200-0.400-2-1.800c2-1.800 5-1.600 6.400 0.200z" fill="url(#g57)"/><path d="M1.800 9.600c1.800 3.200 6.200 4.200 9.200 1.900l2.600 0.200 0.200-5.500-5.200 0.400 2 1.800c-2 1.800-4.800 1.600-6.400-0.200z" fill="url(#g58)"/></svg></div><div class="a nv" style="left:294px">Reload</div><div class="a" style="left:334px;top:8px"><svg width="14.5" height="14.5" viewBox="0 0 14.5 14.5" ><rect x="0" y="0" width="14.500" height="14.500" fill="#8ea2c2"/><path d="M0 0h14.500v1.400h-13.100v13.100h-1.400z" fill="#161c30"/><rect x="1.400" y="1.400" width="12.100" height="12.100" fill="#fff"/><path d="M2.600 9.200l3.600 3 5.200-8" fill="none" stroke="#27ae3c" stroke-width="2.500"/></svg></div><div class="a nv" style="left:354.5px">Select All</div><div class="a" style="left:407px;top:8px"><svg width="14.5" height="14.5" viewBox="0 0 14.5 14.5" ><rect x="0" y="0" width="14.500" height="14.500" fill="#8e8e8e"/><path d="M0 0h14.500v1.500h-13v13h-1.500z" fill="#161616"/><rect x="1.500" y="1.500" width="12.200" height="12.200" fill="#a9a9a9"/></svg></div><div class="a nv" style="left:427px">Unselect All</div></div>
<div id="grid"><div id="gh"><div id="ghi"></div><div class="hc" style="left:54px;width:458px">Name</div><div class="hc" style="left:512px;width:66px">Size</div><div class="hc" style="left:578px;width:131px"><span style="letter-spacing:0.05px">Last Modified (East Africa Time)</span></div><div class="hc" style="left:709px;width:161px">Type</div><div class="hc" style="left:870px;width:57px">Perms</div></div>
<div id="gb">
<div class="row" style="top:0px"><div class="a" style="left:12px;top:6px"><svg width="17" height="15" viewBox="0 0 17 15" ><defs><linearGradient id="g59" x1="0" y1="0" x2="0" y2="1"><stop offset="0" stop-color="#86b0de"/><stop offset="1" stop-color="#6e9ed3"/></linearGradient><linearGradient id="g60" x1="0" y1="0" x2="0" y2="1"><stop offset="0" stop-color="#8e8e8e"/><stop offset="1" stop-color="#767676"/></linearGradient></defs><path d="M-0.300 14.300v-13.300q0-0.800 0.800-0.800h5.600q0.500 0 0.700 0.400l0.900 1.700h5.600q0.600 0 0.600 0.600v11.400z" fill="url(#g60)"/><path d="M1.500 4.600l15.300-0.300-0.900 10.300h-14.400z" fill="url(#g59)" stroke="#4c7cba" stroke-width="0.600"/><path d="M1.500 14.700h14.400" stroke="#3f6cab" stroke-width="0.700"/></svg></div><div class="c" style="left:54px;width:458px">cgi-bin</div><div class="c" style="left:512px;width:66px">4 KB</div><div class="c" style="left:578px;width:131px">Dec 18, 2018 9:20 PM</div><div class="c" style="left:709px;width:161px">httpd/unix-directory</div><div class="c" style="left:870px;width:57px">0755</div></div>
<div class="row o" style="top:27px"><div class="a" style="left:12px;top:6px"><svg width="17" height="15" viewBox="0 0 17 15" ><defs><linearGradient id="g61" x1="0" y1="0" x2="0" y2="1"><stop offset="0" stop-color="#86b0de"/><stop offset="1" stop-color="#6e9ed3"/></linearGradient><linearGradient id="g62" x1="0" y1="0" x2="0" y2="1"><stop offset="0" stop-color="#8e8e8e"/><stop offset="1" stop-color="#767676"/></linearGradient></defs><path d="M-0.300 14.300v-13.300q0-0.800 0.800-0.800h5.600q0.500 0 0.700 0.400l0.900 1.700h5.600q0.600 0 0.600 0.600v11.400z" fill="url(#g62)"/><path d="M1.500 4.600l15.300-0.300-0.900 10.300h-14.400z" fill="url(#g61)" stroke="#4c7cba" stroke-width="0.600"/><path d="M1.500 14.700h14.400" stroke="#3f6cab" stroke-width="0.700"/></svg></div><div class="c" style="left:54px;width:458px">data</div><div class="c" style="left:512px;width:66px">4 KB</div><div class="c" style="left:578px;width:131px">Today 4:08 PM</div><div class="c" style="left:709px;width:161px">httpd/unix-directory</div><div class="c" style="left:870px;width:57px">0755</div></div>
<div class="row" style="top:54px"><div class="a" style="left:12px;top:6px"><svg width="17" height="15" viewBox="0 0 17 15" ><defs><linearGradient id="g63" x1="0" y1="0" x2="0" y2="1"><stop offset="0" stop-color="#86b0de"/><stop offset="1" stop-color="#6e9ed3"/></linearGradient><linearGradient id="g64" x1="0" y1="0" x2="0" y2="1"><stop offset="0" stop-color="#8e8e8e"/><stop offset="1" stop-color="#767676"/></linearGradient></defs><path d="M-0.300 14.300v-13.300q0-0.800 0.800-0.800h5.600q0.500 0 0.700 0.400l0.900 1.700h5.600q0.600 0 0.600 0.600v11.400z" fill="url(#g64)"/><path d="M1.500 4.600l15.300-0.300-0.900 10.300h-14.400z" fill="url(#g63)" stroke="#4c7cba" stroke-width="0.600"/><path d="M1.500 14.700h14.400" stroke="#3f6cab" stroke-width="0.700"/></svg></div><div class="c" style="left:54px;width:458px">modules</div><div class="c" style="left:512px;width:66px">4 KB</div><div class="c" style="left:578px;width:131px">Today 4:08 PM</div><div class="c" style="left:709px;width:161px">httpd/unix-directory</div><div class="c" style="left:870px;width:57px">0755</div></div>
<div class="row o" style="top:81px"><div class="a" style="left:12px;top:6px"><svg width="17" height="15" viewBox="0 0 17 15" ><defs><linearGradient id="g65" x1="0" y1="0" x2="0" y2="1"><stop offset="0" stop-color="#86b0de"/><stop offset="1" stop-color="#6e9ed3"/></linearGradient><linearGradient id="g66" x1="0" y1="0" x2="0" y2="1"><stop offset="0" stop-color="#8e8e8e"/><stop offset="1" stop-color="#767676"/></linearGradient></defs><path d="M-0.300 14.300v-13.300q0-0.800 0.800-0.800h5.600q0.500 0 0.700 0.400l0.900 1.700h5.600q0.600 0 0.600 0.600v11.400z" fill="url(#g66)"/><path d="M1.500 4.600l15.300-0.300-0.900 10.300h-14.400z" fill="url(#g65)" stroke="#4c7cba" stroke-width="0.600"/><path d="M1.500 14.700h14.400" stroke="#3f6cab" stroke-width="0.700"/></svg></div><div class="c" style="left:54px;width:458px">skins</div><div class="c" style="left:512px;width:66px">4 KB</div><div class="c" style="left:578px;width:131px">Today 4:08 PM</div><div class="c" style="left:709px;width:161px">httpd/unix-directory</div><div class="c" style="left:870px;width:57px">0755</div></div>
<div class="row" style="top:108px"><div class="a" style="left:12px;top:5px"><svg width="16" height="18" viewBox="0 0 16 18" ><defs><linearGradient id="g67" x1="0" y1="0" x2="0" y2="1"><stop offset="0" stop-color="#ffffff"/><stop offset="1" stop-color="#e0e0e0"/></linearGradient></defs><path d="M1 0.500h14.500v16.500h-14.500z" fill="url(#g67)" stroke="#c6c6c6" stroke-width="0.700"/><path d="M1 0.500h14.500" stroke="#a8a8a8" stroke-width="0.700"/><path d="M0.500 17.400h15.500" stroke="#8c8c8c" stroke-width="0.900"/><path d="M5 3h9.500M5 4.600h9.500M5 6.200h9.500M5 7.800h9.500M5 10.600h9.500M5 12.200h9.500M5 13.800h7" stroke="#c2c2c2" stroke-width="0.800"/><path d="M3.400 1v16" stroke="#d6d6d6" stroke-width="0.700"/><path d="M1.200 9v8" stroke="#a4a4a4" stroke-width="0.700"/></svg></div><div class="c" style="left:54px;width:458px">.ftpquota</div><div class="c" style="left:512px;width:66px">4 bytes</div><div class="c" style="left:578px;width:131px">Dec 18, 2018 9:20 PM</div><div class="c" style="left:709px;width:161px">text/x-generic</div><div class="c" style="left:870px;width:57px">0600</div></div>
<div class="row o" style="top:135px"><div class="a" style="left:12px;top:5px"><svg width="16" height="18" viewBox="0 0 16 18" ><defs><linearGradient id="g68" x1="0" y1="0" x2="0" y2="1"><stop offset="0" stop-color="#ffffff"/><stop offset="1" stop-color="#e0e0e0"/></linearGradient></defs><path d="M1 0.500h14.500v16.500h-14.500z" fill="url(#g68)" stroke="#c6c6c6" stroke-width="0.700"/><path d="M1 0.500h14.500" stroke="#a8a8a8" stroke-width="0.700"/><path d="M0.500 17.400h15.500" stroke="#8c8c8c" stroke-width="0.900"/><path d="M5 3h9.500M5 4.600h9.500M5 6.200h9.500M5 7.800h9.500M5 10.600h9.500M5 12.200h9.500M5 13.800h7" stroke="#c2c2c2" stroke-width="0.800"/><path d="M3.400 1v16" stroke="#d6d6d6" stroke-width="0.700"/><path d="M1.200 9v8" stroke="#a4a4a4" stroke-width="0.700"/></svg></div><div class="c" style="left:54px;width:458px">.htaccess</div><div class="c" style="left:512px;width:66px">979 bytes</div><div class="c" style="left:578px;width:131px">Yesterday 1:44 PM</div><div class="c" style="left:709px;width:161px">text/x-generic</div><div class="c" style="left:870px;width:57px">0644</div></div>
<div class="row" style="top:162px"><div class="a" style="left:10px;top:6px"><svg width="19" height="16" viewBox="0 0 19 16" ><defs><linearGradient id="g69" x1="0" y1="0" x2="0" y2="1"><stop offset="0" stop-color="#36569a"/><stop offset="0.550" stop-color="#8da5cb"/><stop offset="0.700" stop-color="#4f679d"/><stop offset="1" stop-color="#26366a"/></linearGradient><radialGradient id="g70"><stop offset="0" stop-color="#fffff0"/><stop offset="0.600" stop-color="#eef4c8"/><stop offset="1" stop-color="#c8d8c0" stop-opacity="0"/></radialGradient></defs><rect x="0.400" y="0.400" width="18.200" height="15.200" rx="1.200" fill="#eceeec" stroke="#cccccc" stroke-width="0.700"/><path d="M1 0.400h17.500" stroke="#a2a2a2" stroke-width="0.800"/><path d="M0.400 1v13.500" stroke="#b8b8b8" stroke-width="0.700"/><rect x="2.800" y="2.400" width="15.100" height="10.500" fill="url(#g69)"/><circle cx="6" cy="5.400" r="2.300" fill="url(#g70)"/><path d="M11.800 8.800l1.400-2.800 1.200-0.800 1.400 1.600 0.600 2.200z" fill="#4a4e62"/><path d="M15.200 15.600l3.400-3.400v2.600q0 0.800-0.800 0.800z" fill="#d0d0d0" stroke="#a8a8a8" stroke-width="0.500"/><path d="M15.200 15.400l0.400-2.400 2.800-0.600z" fill="#f4f4f4" stroke="#b4b4b4" stroke-width="0.400"/></svg></div><div class="c" style="left:54px;width:458px">favicon.ico</div><div class="c" style="left:512px;width:66px">1.12 KB</div><div class="c" style="left:578px;width:131px">Yesterday 1:44 PM</div><div class="c" style="left:709px;width:161px">image/x-generic</div><div class="c" style="left:870px;width:57px">0644</div></div>
<div class="row o" style="top:189px"><div class="a" style="left:11px;top:5.5px"><svg width="17" height="17" viewBox="0 0 17 17" ><path d="M3 0.800h11.500q1.800 0 1.700 1.800l-0.800 10.900q-0.200 2.400-2.400 2.400h-11q-1.600 0-1.600-1.700 0-1.600 1.600-1.600h0.400z" fill="#eef6ff" stroke="#7ab6ec" stroke-width="0.900"/><path d="M2 12.600h9.200q0.900 0 0.900 0.900v0.800" fill="none" stroke="#6aa8e4" stroke-width="0.800"/><path d="M1.500 14.600h9" stroke="#a9cdf2" stroke-width="0.800"/><text x="8.300" y="11.200" font-family="Liberation Sans,sans-serif" font-weight="bold" font-size="9.400" text-anchor="middle" fill="#1a1c52" textLength="14.300" lengthAdjust="spacingAndGlyphs">PHP</text></svg></div><div class="c" style="left:54px;width:458px">install.php</div><div class="c" style="left:512px;width:66px">30.23 KB</div><div class="c" style="left:578px;width:131px">Yesterday 1:44 PM</div><div class="c" style="left:709px;width:161px">application/x-httpd-php</div><div class="c" style="left:870px;width:57px">0644</div></div>
<div class="row" style="top:216px"><div class="a" style="left:12px;top:4px"><svg width="15" height="19" viewBox="0 0 15 19" ><defs><linearGradient id="g71" x1="0" y1="0" x2="0" y2="1"><stop offset="0" stop-color="#ffffff"/><stop offset="1" stop-color="#d6d6d6"/></linearGradient><linearGradient id="g72" x1="0" y1="0" x2="0" y2="1"><stop offset="0" stop-color="#d62a20"/><stop offset="1" stop-color="#ea4a30"/></linearGradient></defs><path d="M3.500 0.500h11v17.500h-14v-14.500z" fill="url(#g71)" stroke="#a6a6a6" stroke-width="0.800"/><path d="M3.500 0.500v3h-3z" fill="#f4f4f4" stroke="#a6a6a6" stroke-width="0.600"/><text x="7.800" y="15.800" font-family="Liberation Serif,serif" font-weight="bold" font-size="17.500" text-anchor="middle" fill="url(#g72)" textLength="10.400" lengthAdjust="spacingAndGlyphs">T</text></svg></div><div class="c" style="left:54px;width:458px">install.txt</div><div class="c" style="left:512px;width:66px">1.52 KB</div><div class="c" style="left:578px;width:131px">Yesterday 1:44 PM</div><div class="c" style="left:709px;width:161px">text/plain</div><div class="c" style="left:870px;width:57px">0644</div></div>
<div class="row o" style="top:243px"><div class="a" style="left:10px;top:8px"><svg width="19" height="13" viewBox="0 0 19 13" ><defs><linearGradient id="g73" x1="0" y1="0" x2="0" y2="1"><stop offset="0" stop-color="#c58634"/><stop offset="0.350" stop-color="#e2a850"/><stop offset="1" stop-color="#f3be6a"/></linearGradient></defs><path d="M4.500 0.200h11.500l1.600 3.600h-14.800z" fill="#c8923f"/><path d="M5.500 1.200h9.600l0.800 1.600h-11z" fill="#b98232"/><path d="M4.500 0.200l-4.400 4.200 2.900 0.600 1.400-1.300z" fill="#e9b660" stroke="#d39a44" stroke-width="0.400"/><path d="M16 0.200l2.900 3.100-0.300 2.400-1.100-0.500z" fill="#dca448" stroke="#c48a34" stroke-width="0.400"/><rect x="3.200" y="5.600" width="13.900" height="6.900" rx="0.500" fill="url(#g73)" stroke="#b78438" stroke-width="0.700"/><path d="M2.300 3.700h15.500v2.200h-15.500z" fill="#f6d49a" stroke="#e0b068" stroke-width="0.400"/></svg></div><div class="c" style="left:54px;width:458px">jamroom-audio-pro-premium-trial.zip</div><div class="c" style="left:512px;width:66px">29.49 MB</div><div class="c" style="left:578px;width:131px">Today 4:06 PM</div><div class="c" style="left:709px;width:161px">package/x-generic</div><div class="c" style="left:870px;width:57px">0644</div></div>
<div class="row" style="top:270px"><div class="a" style="left:12px;top:4px"><svg width="15" height="19" viewBox="0 0 15 19" ><defs><linearGradient id="g74" x1="0" y1="0" x2="0" y2="1"><stop offset="0" stop-color="#ffffff"/><stop offset="1" stop-color="#d6d6d6"/></linearGradient><linearGradient id="g75" x1="0" y1="0" x2="0" y2="1"><stop offset="0" stop-color="#d62a20"/><stop offset="1" stop-color="#ea4a30"/></linearGradient></defs><path d="M3.500 0.500h11v17.500h-14v-14.500z" fill="url(#g74)" stroke="#a6a6a6" stroke-width="0.800"/><path d="M3.500 0.500v3h-3z" fill="#f4f4f4" stroke="#a6a6a6" stroke-width="0.600"/><text x="7.800" y="15.800" font-family="Liberation Serif,serif" font-weight="bold" font-size="17.500" text-anchor="middle" fill="url(#g75)" textLength="10.400" lengthAdjust="spacingAndGlyphs">T</text></svg></div><div class="c" style="left:54px;width:458px">license.txt</div><div class="c" style="left:512px;width:66px">16.33 KB</div><div class="c" style="left:578px;width:131px">Yesterday 1:44 PM</div><div class="c" style="left:709px;width:161px">text/plain</div><div class="c" style="left:870px;width:57px">0644</div></div>
<div class="row o" style="top:297px"><div class="a" style="left:12px;top:5px"><svg width="16" height="18" viewBox="0 0 16 18" ><defs><linearGradient id="g76" x1="0" y1="0" x2="0" y2="1"><stop offset="0" stop-color="#f6f6f6"/><stop offset="1" stop-color="#d9d9d9"/></linearGradient><radialGradient id="g77" cx="0.450" cy="0.300" r="0.800"><stop offset="0" stop-color="#ffffff"/><stop offset="0.450" stop-color="#b9dbff"/><stop offset="0.850" stop-color="#2f78d4"/><stop offset="1" stop-color="#1f5cb4"/></radialGradient></defs><rect x="0.500" y="0.500" width="14.800" height="16.800" rx="0.800" fill="url(#g76)" stroke="#adadad" stroke-width="0.800"/><path d="M0.500 0.600h14.800" stroke="#8e8e8e" stroke-width="0.800"/><path d="M0.500 17.300h14.800" stroke="#7e7e7e" stroke-width="0.900"/><path d="M4.500 3.200h8.500M4.500 5.200h8.500" stroke="#c6c6c6" stroke-width="0.700"/><path d="M3.200 1.500v15" stroke="#cdcdcd" stroke-width="0.700"/><circle cx="11" cy="11.800" r="5.600" fill="url(#g77)" stroke="#5a5aa4" stroke-width="0.900"/><path d="M7.400 12.400c0.600-0.800 1.600-0.600 2 0.400s0.600 2.200 0 2.400-1.400-0.800-1.800-1.600-0.600-0.800-0.200-1.200zM11.400 8c1.200-0.600 3 0.200 3.800 1.600l-1.200 1.200c-0.800-0.400-1.600-0.200-2.200-0.800s-1-1.600-0.400-2z" fill="#4a92e4" opacity="0.800"/></svg></div><div class="c" style="left:54px;width:458px">repair.php.html</div><div class="c" style="left:512px;width:66px">5.76 KB</div><div class="c" style="left:578px;width:131px">Yesterday 1:44 PM</div><div class="c" style="left:709px;width:161px">text/html</div><div class="c" style="left:870px;width:57px">0644</div></div>
<div class="row" style="top:324px"><div class="a" style="left:12px;top:4px"><svg width="15" height="19" viewBox="0 0 15 19" ><defs><linearGradient id="g78" x1="0" y1="0" x2="0" y2="1"><stop offset="0" stop-color="#ffffff"/><stop offset="1" stop-color="#d6d6d6"/></linearGradient><linearGradient id="g79" x1="0" y1="0" x2="0" y2="1"><stop offset="0" stop-color="#d62a20"/><stop offset="1" stop-color="#ea4a30"/></linearGradient></defs><path d="M3.500 0.500h11v17.500h-14v-14.500z" fill="url(#g78)" stroke="#a6a6a6" stroke-width="0.800"/><path d="M3.500 0.500v3h-3z" fill="#f4f4f4" stroke="#a6a6a6" stroke-width="0.600"/><text x="7.800" y="15.800" font-family="Liberation Serif,serif" font-weight="bold" font-size="17.500" text-anchor="middle" fill="url(#g79)" textLength="10.400" lengthAdjust="spacingAndGlyphs">T</text></svg></div><div class="c" style="left:54px;width:458px">robots.txt</div><div class="c" style="left:512px;width:66px">161 bytes</div><div class="c" style="left:578px;width:131px">Yesterday 1:44 PM</div><div class="c" style="left:709px;width:161px">text/plain</div><div class="c" style="left:870px;width:57px">0644</div></div>
</div></div>
</body></html>
